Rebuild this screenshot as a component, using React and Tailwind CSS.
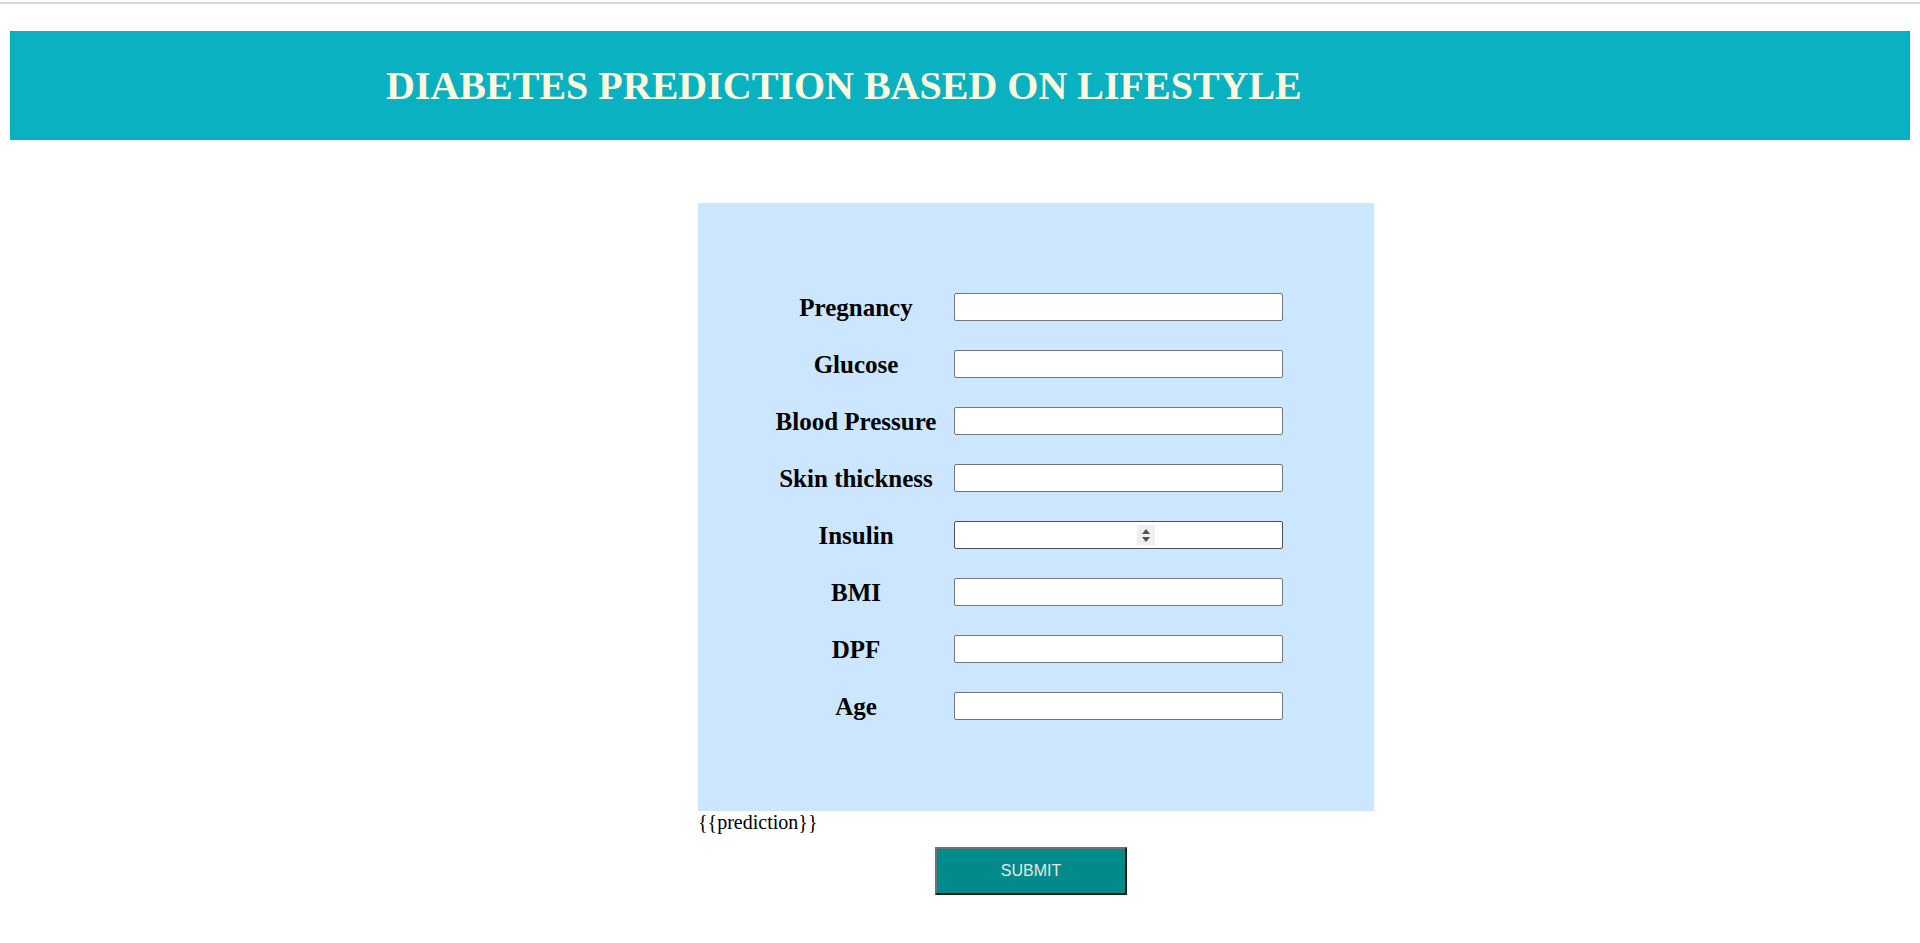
import React from "react";

const fields = [
  "Pregnancy",
  "Glucose",
  "Blood Pressure",
  "Skin thickness",
  "Insulin",
  "BMI",
  "DPF",
  "Age",
];

const App = () => {
  return (
    <div className="min-h-[943px] bg-white font-['Liberation_Serif',serif]">
      <div className="pt-[2px]">
        <div className="h-[2px] bg-[#d6d6d6]" />
      </div>

      <div className="mx-[10px] mt-[27px] h-[109px] bg-[#0ab1c0] flex items-center pl-[376px]">
        <h1 className="text-[40px] leading-none font-bold text-[#fff8dc] whitespace-nowrap">
          DIABETES PREDICTION BASED ON LIFESTYLE
        </h1>
      </div>

      <div className="ml-[698px] w-[676px] mt-[63px]">
        <div className="bg-[#cce6ff] h-[608px] pt-[90px] pl-[72px] flex flex-col gap-[29px]">
          {fields.map((label) => (
            <div key={label} className="flex items-center h-[28px]">
              <label className="w-[172px] text-center text-[25px] font-bold text-black leading-none whitespace-nowrap">
                {label}
              </label>
              <div className="relative ml-[12px]">
                <input
                  type="text"
                  className={`block w-[329px] h-[28px] bg-white border rounded-[2px] outline-none ${
                    label === "Insulin" ? "border-[#4f4f4f]" : "border-[#767676]"
                  }`}
                />
                {label === "Insulin" && (
                  <div className="absolute left-[183px] top-[4px] w-[18px] h-[20px] bg-[#efefef] flex flex-col items-center justify-center gap-[3px]">
                    <div className="w-0 h-0 border-l-[4px] border-r-[4px] border-b-[5px] border-l-transparent border-r-transparent border-b-[#505050]" />
                    <div className="w-0 h-0 border-l-[4px] border-r-[4px] border-t-[5px] border-l-transparent border-r-transparent border-t-[#505050]" />
                  </div>
                )}
              </div>
            </div>
          ))}
        </div>

        <div className="text-[20px] leading-[22px] text-black">
          {"{{prediction}}"}
        </div>

        <button
          type="button"
          className="ml-[237px] mt-[14px] w-[192px] h-[48px] bg-[#008b8b] text-[#e6e6e6] text-[16px] font-['Liberation_Sans',sans-serif] border-2 border-t-[#707070] border-l-[#707070] border-b-[#1c1c1c] border-r-[#1c1c1c] flex items-center justify-center"
        >
          SUBMIT
        </button>
      </div>
    </div>
  );
};

export default App;
